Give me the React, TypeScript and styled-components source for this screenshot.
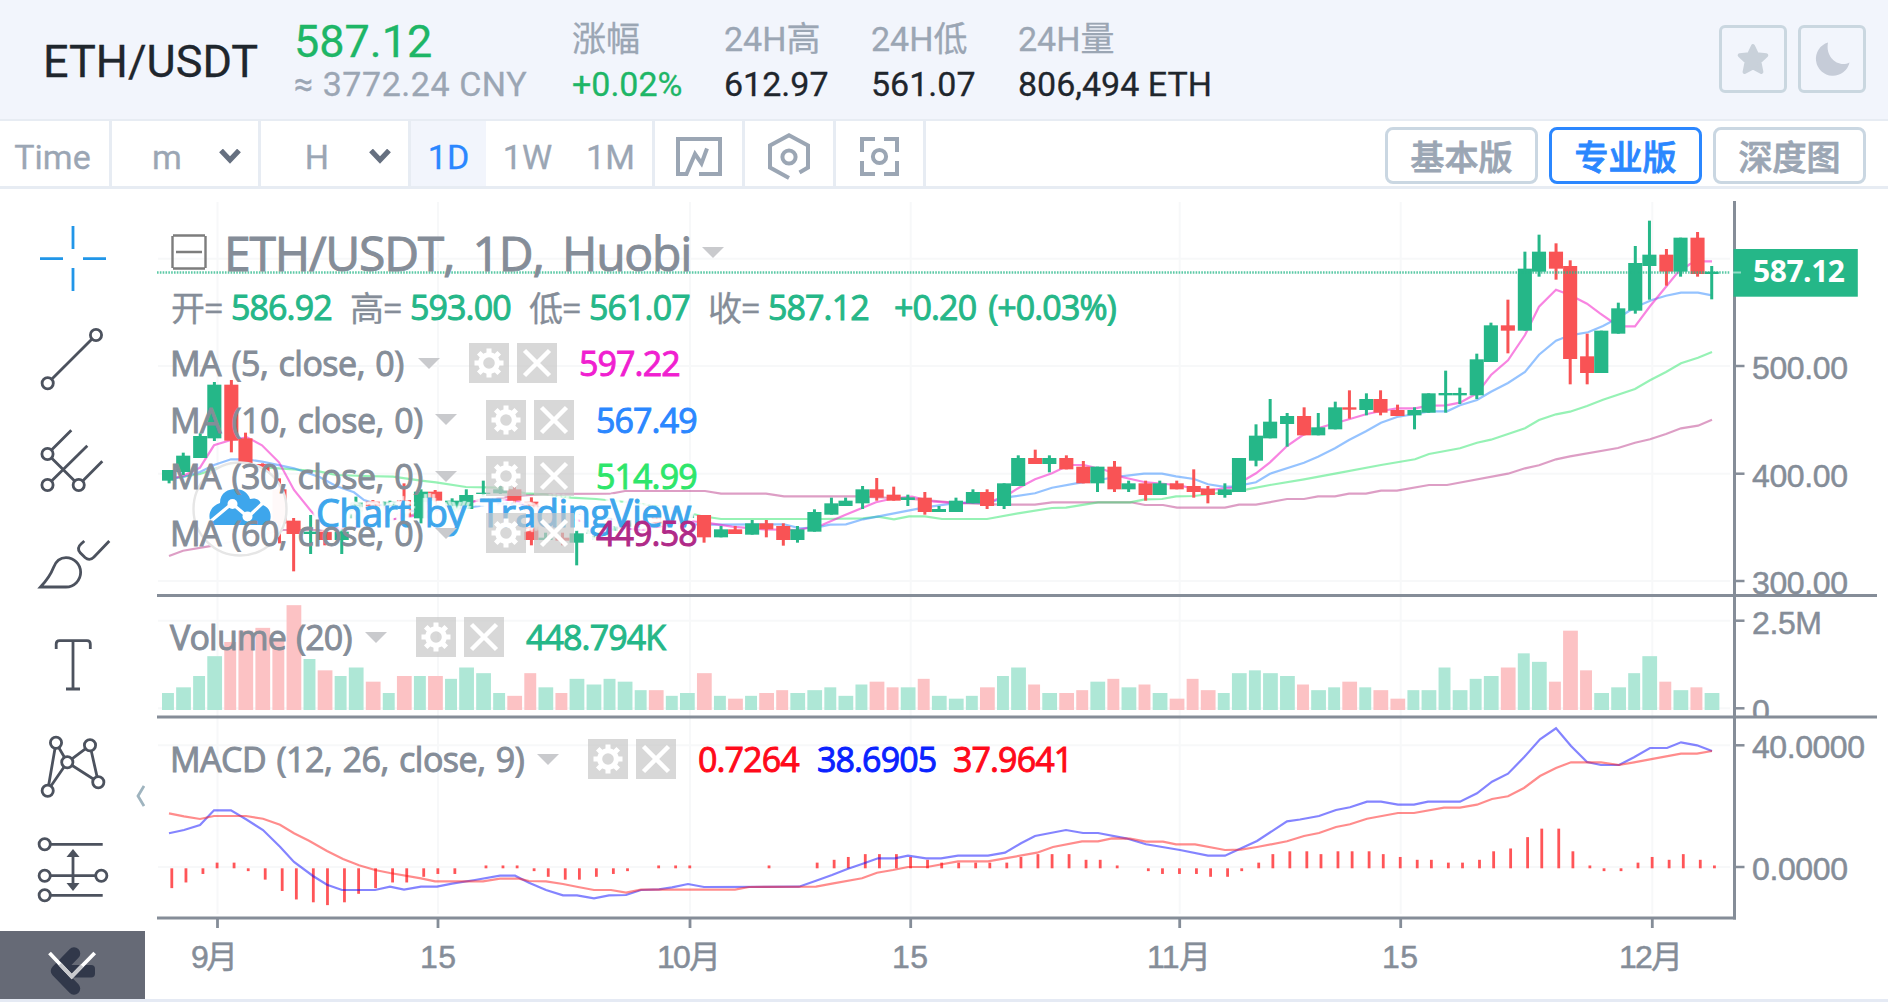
import React from "react";
import styled, { createGlobalStyle, css } from "styled-components";

const Color = {
  header: "#f2f5fc",
  line: "#e7ecf3",
  muted: "#9ba6b4",
  dark: "#1f262d",
  green: "#1eb667",
  blue: "#2b87ff",
  axis: "#858d98",
  up: "#25b788",
  down: "#f95355",
  tool: "#4c525e",
};

const GlobalStyle = createGlobalStyle`
  body {
    margin: 0;
    background: #fff;
    font-family: Roboto, "Noto Sans CJK SC", sans-serif;
  }
  * {
    box-sizing: border-box;
  }
`;

const flex = styled.div`
  display: flex;
  align-items: center;
`;

const Page = styled.div`
  display: flex;
  flex-direction: column;
  width: 1888px;
  height: 1002px;
  overflow: hidden;
  border-bottom: 3px solid #e5eaf4;
`;

/* header */
const Header = styled(flex)`
  flex: none;
  height: 121px;
  padding: 0 22px 0 43px;
  background: ${Color.header};
  border-bottom: 2px solid ${Color.line};
  -webkit-text-stroke: 0.3px currentColor;
`;
const Pair = styled.h1`
  margin: 0 38px 0 0;
  padding-top: 5px;
  width: 213px;
  font-size: 45px;
  font-weight: 400;
  line-height: 60px;
  white-space: nowrap;
  color: ${Color.dark};
`;
const Stat = styled.div<{ $w: number }>`
  display: flex;
  flex-direction: column;
  width: ${(p) => p.$w}px;
  padding-top: 5px;
  font-size: 34px;
  line-height: 45px;
  white-space: nowrap;
`;
const Price = styled.span`
  padding-top: 2px;
  margin-bottom: -2px;
  font-size: 45px;
  color: ${Color.green};
`;
const Muted = styled.span<{ $spacing?: number }>`
  letter-spacing: ${(p) => p.$spacing || 0}px;
  color: ${Color.muted};
`;
const Value = styled.span<{ $up?: boolean }>`
  color: ${(p) => (p.$up ? Color.green : Color.dark)};
`;
const HeaderButtons = styled(flex)`
  gap: 11px;
  margin-left: auto;
  padding-bottom: 1px;
`;
const SquareButton = styled.button`
  display: flex;
  align-items: center;
  justify-content: center;
  width: 68px;
  height: 68px;
  padding: 0;
  background: none;
  border: 3px solid #cad7e0;
  border-radius: 6px;
`;

/* toolbar */
const Toolbar = styled(flex)`
  flex: none;
  height: 68px;
  padding-right: 22px;
  border-bottom: 3px solid ${Color.line};
  font-size: 34px;
  color: ${Color.muted};
  -webkit-text-stroke: 0.3px currentColor;
`;
const Cell = styled(flex)<{ $w: number; $line?: boolean; $active?: boolean }>`
  justify-content: center;
  width: ${(p) => p.$w}px;
  height: 100%;
  padding-top: 6px;
  ${(p) =>
    p.$line &&
    css`
      border-right: 3px solid ${Color.line};
    `}
  ${(p) =>
    p.$active &&
    css`
      background: ${Color.header};
      color: ${Color.blue};
    `}
`;
const TimeCell = styled(Cell)`
  padding-right: 4px;
`;
const Dropdown = styled(Cell)`
  justify-content: flex-end;
  padding-right: 17px;
`;
const Unit = styled.span`
  width: 60px;
  margin-right: 22px;
  text-align: center;
`;
const Modes = styled(flex)`
  gap: 11px;
  margin-left: auto;
  padding-top: 4px;
`;
const Mode = styled.button<{ $active?: boolean }>`
  width: 153px;
  height: 57px;
  padding: 0;
  background: #fff;
  border: 3px solid ${(p) => (p.$active ? Color.blue : "#cad7e2")};
  border-radius: 8px;
  font: 500 34px "Noto Sans CJK SC", sans-serif;
  line-height: 51px;
  -webkit-text-stroke: 0.8px currentColor;
  color: ${(p) => (p.$active ? Color.blue : Color.muted)};
`;

/* body */
const Body = styled.div`
  display: grid;
  grid-template-columns: 145px 1fr;
  flex: 1;
  min-height: 0;
`;
const Sidebar = styled.div`
  position: relative;
  display: flex;
  flex-direction: column;
  padding-top: 18px;
`;
const Tool = styled.svg<{ $active?: boolean }>`
  width: 145px;
  height: 102px;
  flex: none;
  fill: none;
  stroke: ${(p) => (p.$active ? "#2196e8" : Color.tool)};
  stroke-width: 2.8px;
  circle {
    fill: #fff;
  }
`;
const Collapse = styled.svg`
  position: absolute;
  right: 0;
  top: 596px;
`;
const More = styled.div`
  margin-top: auto;
  height: 68px;
  background: #666a76;
`;

const ChartArea = styled.div`
  position: relative;
`;
const ChartSvg = styled.svg`
  display: block;
  width: 1743px;
  height: 810px;
`;
const AxisText = styled.text`
  font-family: "Liberation Sans", "Noto Sans CJK SC", sans-serif;
  font-size: 32px;
  fill: ${Color.axis};
  stroke: ${Color.axis};
  stroke-width: 0.5px;
`;
const Watermark = styled.span`
  position: absolute;
  left: 171px;
  top: 297px;
  font-family: "Open Sans", sans-serif;
  font-size: 38px;
  line-height: 52px;
  letter-spacing: -0.6px;
  word-spacing: 5px;
  white-space: nowrap;
  color: #3ea6ec;
  -webkit-text-stroke: 1px #3ea6ec;
  /* the white halo fades the candles behind the letters */
  text-shadow: ${[
    [5, 0], [-5, 0], [0, 5], [0, -5], [4, 4], [-4, 4], [4, -4], [-4, -4], [2, 0], [-2, 0],
  ]
    .map(([x, y]) => `${x}px ${y}px 1px rgba(255, 255, 255, 0.75)`)
    .join(", ")};
`;

/* legends lie over the panes */
const Legend = styled.div<{ $top: number }>`
  position: absolute;
  left: 26px;
  top: ${(p) => p.$top}px;
  font-family: "Open Sans", "Noto Sans CJK SC", sans-serif;
  font-size: 34px;
  white-space: nowrap;
  color: ${Color.axis};
  -webkit-text-stroke: 0.95px currentColor;
`;
const TitleRow = styled(flex)`
  height: 60px;
  font-size: 48px;
`;
const Title = styled.span`
  width: 478px;
  margin-left: 17px;
  letter-spacing: -1.2px;
  word-spacing: 7px;
`;
const OhlcRow = styled(flex)`
  height: 49px;
`;
const Ohlc = styled(flex)<{ $w: number }>`
  width: ${(p) => p.$w}px;
  letter-spacing: -0.9px;
`;
const OhlcLabel = styled.span`
  width: 60px;
  -webkit-text-stroke: 0.3px currentColor;
`;
const Up = styled.span`
  color: ${Color.up};
`;
const Change = styled(Up)`
  letter-spacing: -0.9px;
  word-spacing: 4px;
`;
const StudyRow = styled(flex)`
  height: 40px;
  margin-bottom: 16.7px;
`;
const StudyName = styled.span<{ $w: number; $spacing?: number }>`
  width: ${(p) => p.$w}px;
  margin-left: -1px;
  letter-spacing: ${(p) => p.$spacing ?? -0.5}px;
  word-spacing: 2px;
`;
const StudyButton = styled.span`
  display: flex;
  align-items: center;
  justify-content: center;
  width: 40px;
  height: 40px;
  margin-right: 8px;
  background: rgba(200, 200, 200, 0.7);
`;
const StudyValue = styled.span<{ $color: string; $w?: number }>`
  margin-left: 14px;
  width: ${(p) => (p.$w ? `${p.$w}px` : "auto")};
  letter-spacing: -0.9px;
  color: ${(p) => p.$color};
`;
const Caret = styled.svg`
  width: 22px;
  height: 11px;
  flex: none;
  fill: #c9cacd;
`;
const Gap = styled.span`
  width: 29px;
`;

const Chevron = () => (
  <svg width="22" height="15" viewBox="0 0 22 15">
    <path d="M2 1.5 L11 11 L20 1.5" fill="none" stroke="#667080" strokeWidth="5.2" />
  </svg>
);

const Down = () => (
  <Caret viewBox="0 0 22 11">
    <path d="M0 0 H22 L11 11 Z" />
  </Caret>
);

const Gear = () => (
  <svg width="30" height="30" viewBox="-15 -15 30 30" stroke="#fff" fill="none">
    <circle r="8.3" strokeWidth="5" />
    {[0, 45, 90, 135].map((a) => (
      <path key={a} d="M0 -14.5 V-9 M0 9 V14.5" strokeWidth="5" transform={`rotate(${a})`} />
    ))}
  </svg>
);

const Cross = () => (
  <svg width="30" height="30" viewBox="0 0 30 30">
    <path d="M2.5 2.5 L27.5 27.5 M27.5 2.5 L2.5 27.5" stroke="#fff" strokeWidth="4.5" />
  </svg>
);

// x of every bar lies on a 2.83px pixel grid
const STEP = 2.8305;
const slot = (k: number) => Math.floor(5.57 * k + 0.06);
const barX = (k: number) => 169 + STEP * slot(k);
const y3 = (v: number) => 190 + v / 3;

type Candle = [number, number, number, number, number];

// rising (1) or falling (0), high, body top, body bottom, low
const candles: Candle[] = [
  [1, 840, 840, 872, 880], [1, 788, 797, 846, 855], [1, 730, 738, 804, 804], [1, 576, 584, 745, 753],
  [0, 570, 584, 752, 787], [0, 728, 745, 822, 822], [0, 820, 822, 846, 850], [0, 865, 898, 1000, 1060],
  [0, 984, 992, 1032, 1144], [1, 975, 1025, 1032, 1092], [0, 1018, 1025, 1050, 1066], [1, 1018, 1025, 1050, 1092],
  [1, 920, 938, 985, 990], [0, 930, 935, 960, 960], [1, 932, 935, 960, 960], [0, 880, 930, 980, 980],
  [1, 898, 905, 985, 1000], [0, 900, 905, 932, 945], [1, 925, 932, 965, 965], [1, 898, 915, 957, 957],
  [1, 872, 908, 912, 920], [1, 888, 898, 910, 912], [0, 890, 898, 932, 940], [0, 922, 935, 1050, 1066],
  [1, 1028, 1043, 1050, 1060], [0, 1028, 1043, 1052, 1066], [1, 1022, 1030, 1058, 1126], [1, 1010, 1018, 1032, 1048],
  [1, 1000, 1008, 1022, 1022], [1, 985, 990, 1010, 1010], [1, 955, 960, 990, 990], [0, 958, 965, 1000, 1000],
  [1, 965, 972, 984, 984], [1, 965, 972, 984, 984], [0, 975, 975, 1042, 1058], [1, 1008, 1018, 1042, 1042],
  [0, 1008, 1018, 1032, 1032], [1, 990, 1000, 1034, 1034], [0, 990, 1000, 1018, 1042], [0, 1000, 1008, 1050, 1067],
  [1, 1008, 1018, 1050, 1058], [1, 958, 966, 1025, 1025], [1, 923, 940, 974, 974], [1, 923, 932, 948, 948],
  [1, 888, 898, 940, 957], [0, 864, 898, 923, 932], [0, 890, 914, 932, 932], [1, 914, 922, 930, 948],
  [0, 906, 923, 966, 974], [1, 948, 957, 966, 966], [1, 923, 932, 966, 966], [1, 898, 906, 940, 940],
  [0, 898, 906, 948, 957], [1, 880, 880, 948, 957], [1, 796, 804, 888, 888], [0, 779, 804, 822, 822],
  [1, 796, 804, 822, 847], [0, 796, 804, 838, 838], [0, 813, 830, 880, 880], [1, 830, 830, 880, 906],
  [0, 813, 830, 898, 906], [1, 872, 880, 898, 906], [0, 872, 880, 915, 932], [1, 872, 880, 915, 915],
  [0, 872, 880, 898, 898], [0, 838, 888, 906, 923], [0, 888, 896, 915, 940], [1, 880, 898, 915, 923],
  [1, 804, 804, 906, 906], [1, 703, 737, 812, 829], [1, 627, 695, 745, 745], [1, 669, 678, 702, 770],
  [0, 652, 678, 736, 736], [1, 669, 712, 736, 736], [1, 635, 652, 718, 718], [0, 601, 652, 659, 686],
  [1, 610, 627, 660, 676], [0, 601, 627, 668, 676], [0, 644, 660, 678, 678], [1, 652, 660, 676, 718],
  [1, 610, 610, 668, 668], [1, 542, 609, 616, 668], [1, 593, 609, 616, 642], [1, 491, 508, 616, 627],
  [1, 398, 406, 516, 516], [0, 329, 406, 422, 490], [1, 185, 236, 422, 422], [1, 134, 185, 245, 260],
  [0, 160, 185, 236, 269], [0, 211, 228, 507, 583], [0, 431, 499, 549, 583], [1, 422, 422, 549, 549],
  [1, 338, 355, 431, 431], [1, 168, 219, 362, 371], [1, 92, 194, 228, 329], [0, 177, 194, 245, 287],
  [1, 143, 143, 245, 260], [0, 126, 143, 252, 260], [1, 228, 245, 252, 328],
];

const volumes = [
  6, 8, 12, 19, 24, 28, 29, 25, 37, 18, 14, 12, 15, 10, 6, 12, 12, 12, 11, 15, 13, 6, 5, 13, 8, 6, 11, 9, 11, 10,
  7, 7, 5, 6, 13, 5, 4, 5, 6, 7, 6, 7, 8, 5, 9, 10, 8, 8, 11, 5, 4, 5, 8, 12, 15, 9, 6, 6, 7, 10,
  11, 8, 9, 6, 4, 11, 7, 6, 13, 14, 13, 12, 9, 7, 8, 10, 8, 7, 4, 7, 7, 15, 7, 11, 12, 15, 20, 17, 10, 28,
  14, 6, 8, 13, 19, 10, 7, 8, 6,
];

const histogram = [
  -7, -5, -2, 2, 2, -1, -4, -8, -11, -12, -13, -12, -9, -7, -5, -5, -3, -2, -2, 0, 1, 1, 1, -1, -3, -4, -4, -3, -2, -1,
  0, 1, 1, 1, 0, 0, 0, 0, 1, 0, 0, 2, 3, 4, 5, 5, 5, 4, 3, 2, 2, 2, 2, 2, 4, 5, 5, 5, 3, 3,
  1, 0, -1, -2, -2, -2, -3, -3, -1, 2, 5, 6, 6, 5, 6, 6, 6, 5, 4, 3, 3, 2, 2, 3, 6, 7, 11, 14, 14, 6,
  1, -1, -1, 2, 4, 3, 5, 3, 1,
];

const lines = [
  {
    color: "#b3277f",
    opacity: 0.45,
    points:
      "169,556 183,550.7 213,545.7 283,530 310,530 341,530 400,518 440,508 480,500 521,495.7 543,494 611,493.7 625,491 705,491 721,493.7 766,493.7 784,496.3 855,496.3 894,498 925,500 959,503 1001,504.7 1035,504.7 1052,502.3 1132,502.3 1145,505 1163,505 1177,507.7 1225,507.7 1239,504.7 1256,504.7 1287,499 1304,499 1318,496.3 1335,496.3 1349,493.7 1366,493.7 1381,490.7 1397,490.7 1429,485 1447,485 1508,473.7 1525,468.3 1539,465.3 1556,459.3 1570,456.3 1618,448 1635,442.7 1650,439.3 1666,434 1681,428.3 1698,425.7 1712,419.7",
  },
  {
    color: "#2ee66b",
    opacity: 0.5,
    points:
      "169,479 200,474 214,469 231,465 267,467.7 294,469.3 320,471.7 336,475 364,476 393,476.7 421,480.7 436,482.3 466,487 500,487.7 525,493.3 546,494.3 571,497.7 596,499 625,502 650,505 671,508 701,516 721,519 822,519 863,518.3 878,516.7 894,519.3 909,516.3 925,516.3 942,519 987,519 1018,513.3 1052,508 1066,507.7 1098,502.3 1130,502.3 1145,499.3 1162,499 1176,496.3 1194,496 1226,492 1247,489.3 1270,485 1304,479.3 1335,473.7 1381,465 1415,459.3 1429,454 1460,448.3 1477,442.7 1491,439.7 1525,428.3 1539,420 1556,414.3 1570,411.7 1587,406 1603,399.7 1635,389 1650,380.3 1666,372 1681,363.3 1698,357.7 1712,352",
  },
  {
    color: "#2b87ff",
    opacity: 0.5,
    points:
      "169,479 183,477 200,472 214,465 231,459.3 247,459.3 262,461.7 294,468.3 320,477.3 336,486 354,492.3 364,500 390,508 420,512 450,510 480,506 514,503 545,508 580,514 620,520 660,524 714,524.7 784,524.3 800,528.3 817,527.3 830,524.7 846,524.3 863,519.3 894,513.3 925,507.3 959,502.7 987,502.7 1012,496.7 1035,493.3 1052,487.7 1076,483.3 1098,480 1119,476.7 1144,473.7 1162,473.7 1176,476.3 1194,479 1208,484.3 1223,486.7 1234,486.7 1256,482.3 1270,473.7 1304,462.7 1318,456.7 1335,448.3 1349,440 1366,431.3 1381,422.7 1397,417 1415,414 1429,411.3 1447,411.3 1460,405.3 1477,400 1491,391.7 1508,383 1525,372 1539,354.7 1556,340.7 1570,335.3 1588,332.3 1603,326 1618,318 1635,307.3 1652,300 1666,295.7 1681,292.7 1698,292.7 1712,295.3",
  },
  {
    color: "#f21fc9",
    opacity: 0.55,
    points:
      "169,479 183,476 200,467.7 214,445.3 231,440 247,437.3 262,445.3 279,462.3 294,490 311,511 325,526 345,530 375,522 420,515 452,507 480,500 514,500 545,513 576,520 608,527 642,530 672,524 690,521 711,523.3 732,526.7 764,529.3 798,530 822,525 845,515 876,502.3 894,498.3 912,496.7 934,501.7 959,503.3 991,501.7 1011,492.7 1019,487.7 1035,479.3 1052,473.3 1069,465 1084,465 1105,470 1123,477.3 1144,482 1176,485 1194,488.3 1209,490 1232,487.7 1239,483.3 1256,473.3 1270,462.3 1287,446 1304,434.3 1318,428.3 1335,423.3 1349,419.3 1366,414.3 1381,411 1397,408.3 1415,408.3 1429,405.7 1446,405.3 1460,402.7 1477,393.3 1491,375 1508,360.3 1525,335 1539,306.7 1556,289.7 1570,295 1587,303.7 1600,313.3 1612,321.7 1623,326.3 1635,326.3 1650,306.3 1666,286.7 1677,273.3 1690,264 1700,261.3 1712,261.3",
  },
];

const macdLine =
  "169,833.3 184,830 200,825 214,810.3 231,810.3 246,819.3 263,830 280,846.7 294,862 313,876 327,884.7 342,890 375,890 390,886.7 404,889.7 421,886.7 437,886.7 452,883.7 475,880 500,875.7 515,875.7 529,882.7 546,890 563,895.3 577,895.3 594,898.3 609,895.3 626,895 641,890 659,889.3 672,887.3 688,884 704,887 799,886.7 816,880.7 832,875 848,868.7 862,864 878,858.3 895,858.3 908,855.7 926,858.3 941,858.3 958,855.7 988,855.7 1005,852.7 1021,843.3 1035,836 1066,830 1083,833 1098,833 1126,838.3 1146,844.3 1180,850 1208,855.7 1225,855.7 1239,849.3 1257,841 1287,821.3 1300,819.5 1319,816 1336,810 1350,807.3 1367,801.7 1381,801.7 1398,804.7 1414,804.7 1428,801.7 1460,801.7 1477,793.3 1492,781.7 1508,773.7 1524,757.3 1540,739.3 1556,728.3 1571,746 1587,762 1601,765 1619,765 1634,757.3 1650,748 1667,748 1681,742.3 1697,745.3 1712,751";
const signalLine =
  "169,813.3 184,816.3 200,819 214,816 246,816 263,818.7 280,824.7 294,833.3 309,840.7 327,851 343,859 359,865.3 375,870 390,873 421,878.3 435,881.3 483,881.3 500,878.7 519,878.7 529,881 546,881.3 563,884 578,887 594,890 611,890 626,892.7 641,889.7 735,889.7 749,887 816,886.7 832,883.7 862,878.3 877,872.7 893,870 908,867 927,867 958,861.3 988,861.3 1005,858.3 1037,852.7 1053,847 1082,841.3 1098,841.3 1112,838.3 1130,838.7 1146,841.7 1163,841.7 1176,844.3 1195,844.3 1225,850 1241,849.7 1257,847 1287,841.3 1304,836 1319,833 1336,827 1350,824.3 1367,818.7 1398,813 1414,813 1444,807.7 1460,807.7 1477,804.7 1492,799 1508,796.3 1524,788 1540,776 1556,768 1571,762.3 1601,762.3 1619,765 1634,762.3 1650,759.3 1681,753.7 1697,753.7 1712,751";

const months = [
  { x: 217.5, label: "9月", from: 191, w: 47 },
  { x: 438, label: "15", from: 420, w: 36 },
  { x: 690, label: "10月", from: 657, w: 64 },
  { x: 910.7, label: "15", from: 892, w: 36 },
  { x: 1179.7, label: "11月", from: 1147, w: 64 },
  { x: 1400.7, label: "15", from: 1382, w: 36 },
  { x: 1652.3, label: "12月", from: 1619, w: 64 },
];

const scale = [
  { y: 366, base: 379, label: "500.00", w: 96 },
  { y: 473.7, base: 486.5, label: "400.00", w: 96 },
  { y: 581, base: 593.5, label: "300.00", w: 96 },
  { y: 620.7, base: 633.5, label: "2.5M", w: 70 },
  { y: 708.3, base: 722, label: "0", w: 17 },
  { y: 745.3, base: 758, label: "40.0000", w: 113 },
  { y: 867, base: 879.5, label: "0.0000", w: 96 },
];

const Chart = () => (
  <ChartSvg viewBox="145 189 1743 810">
    <g stroke="#f7f8f9" strokeWidth="2">
      {months.map((m) => (
        <path key={m.x} d={`M${m.x} 202 V914`} />
      ))}
      {[258.7, ...scale.map((s) => s.y)].map((y) => (
        <path key={y} d={`M158 ${y} H1730`} />
      ))}
    </g>

    {volumes.map((v, k) => (
      <rect
        key={k}
        x={barX(k) - 7}
        y={710 - v * 2.833}
        width={STEP * (slot(k + 1) - slot(k) - 1) + 0.6}
        height={v * 2.833}
        fill={candles[k][0] ? "#aee7d6" : "#fcc2c4"}
      />
    ))}

    {lines.map((l) => (
      <polyline key={l.color} points={l.points} fill="none" stroke={l.color} strokeOpacity={l.opacity} strokeWidth="2.2" />
    ))}

    {candles.map(([up, high, top, bottom, low], k) => (
      <g key={k} fill={up ? Color.up : Color.down}>
        <rect x={barX(k) - 1.4} y={y3(high)} width="3" height={(low - high) / 3} />
        <rect x={barX(k) - 7} y={y3(top)} width="14.1" height={(bottom - top) / 3} />
      </g>
    ))}

    <path d="M157 272.5 H1730" stroke={Color.up} strokeOpacity="0.75" strokeWidth="2.4" strokeDasharray="1.6 1.23" />

    {histogram.map((h, k) => (
      <rect
        key={k}
        x={barX(k) + 1.4}
        y={h > 0 ? 868.3 - h * 2.833 : 868.3}
        width="2.8"
        height={Math.abs(h) * 2.833}
        fill="#ff5558"
      />
    ))}
    <polyline points={macdLine} fill="none" stroke="#0a0aff" strokeOpacity="0.5" strokeWidth="2.2" />
    <polyline points={signalLine} fill="none" stroke="#ff1a1a" strokeOpacity="0.5" strokeWidth="2.2" />

    {/* watermark badge */}
    <circle cx="240" cy="509" r="46.5" fill="#fff" fillOpacity="0.97" stroke="#e6e6e6" strokeWidth="2.4" />
    <path
      d="M213 525 C207 519 208 507 220 503 C220 492 229 489 235 489 C243 489 248 493 250 499 C257 497 261 501 261 505 C269 505 274 516 268 525 Z"
      fill="#3ea6ec"
    />
    <path d="M211 521 L232 503.5 L248 517 L266 500" fill="none" stroke="#fff" strokeWidth="3.2" />
    <circle cx="232.5" cy="504" r="5" fill="#fff" />
    <circle cx="247.5" cy="516.5" r="5" fill="#fff" />

    {scale.map((s) => (
      <AxisText key={s.label} x="1752" y={s.base} textLength={s.w}>
        {s.label}
      </AxisText>
    ))}
    <rect x="1740" y="716" width="140" height="10" fill="#fff" />
    {months.map((m) => (
      <AxisText key={m.x} x={m.from} y="967.5" textLength={m.w}>
        {m.label}
      </AxisText>
    ))}
    <g stroke={Color.axis} strokeWidth="3" fill="none">
      <path d="M1734.5 201 V919.5" />
      <path d="M157 595.5 H1877 M157 717 H1877 M157 918 H1736" />
      {scale.map((s) => (
        <path key={s.y} d={`M1734 ${s.y} H1744.5`} strokeWidth="2.5" />
      ))}
      {months.map((m) => (
        <path key={m.x} d={`M${m.x} 918 V928`} strokeWidth="2.8" />
      ))}
    </g>
    <rect x="1733.5" y="249" width="124.3" height="47.7" fill={Color.up} />
    <path d="M1733 272.5 H1741" stroke="#8fdcc4" strokeWidth="2" />
    <text
      x="1753"
      y="282"
      textLength="92"
      fontFamily='"Open Sans", sans-serif'
      fontWeight="700"
      fontSize="30"
      fill="#fff"
    >
      587.12
    </text>
  </ChartSvg>
);

const studies = [
  { name: "MA (5, close, 0)", w: 248, value: "597.22", color: "#f01fd0" },
  { name: "MA (10, close, 0)", w: 265, value: "567.49", color: "#2b87ff" },
  { name: "MA (30, close, 0)", w: 265, value: "514.99", color: "#2ee66b" },
  { name: "MA (60, close, 0)", w: 265, value: "449.58", color: "#b02a88" },
];

const Study = (props: { name: string; w: number; spacing?: number; children: React.ReactNode }) => (
  <StudyRow>
    <StudyName $w={props.w} $spacing={props.spacing}>
      {props.name}
    </StudyName>
    <Down />
    <Gap />
    <StudyButton>
      <Gear />
    </StudyButton>
    <StudyButton>
      <Cross />
    </StudyButton>
    {props.children}
  </StudyRow>
);

const SideTools = () => (
  <>
    <Tool $active viewBox="0 0 145 102">
      <path d="M73 19 V42 M73 61 V84 M40 51.7 H63 M83 51.7 H106" />
    </Tool>
    <Tool viewBox="0 0 145 102">
      <path d="M47.7 74.3 L96 26" />
      <circle cx="96" cy="26" r="5.6" />
      <circle cx="47.7" cy="74.3" r="5.6" />
    </Tool>
    <Tool viewBox="0 0 145 102">
      <path d="M47.5 43 L71.3 19.3 M47.5 74 L87.3 34.7 M78.7 74 L102.3 50.3 M47.5 43 L78.7 74" />
      <circle cx="47.5" cy="43" r="5.6" />
      <circle cx="47.5" cy="74" r="5.6" />
      <circle cx="78.7" cy="74" r="5.6" />
    </Tool>
    <Tool viewBox="0 0 145 102">
      <path d="M40.5 74 C48 66 51 61 53.5 54.5 C56 48 61 44.7 66 44.7 A14.6 14.6 0 0 1 66 74 Z" />
      <path d="M84.3 28 L81 31 Q76.5 35 80 39.5 L85 44.5 Q89.5 48.5 94 44 L109.3 28" />
    </Tool>
    <Tool viewBox="0 0 145 102">
      <path d="M56.2 34 V29 Q56.2 25.7 59.5 25.7 H87 Q90.3 25.7 90.3 29 V34 M73 25.7 V74 M66 74 H80" />
    </Tool>
    <Tool viewBox="0 0 145 102">
      <path d="M56 25.7 L47.7 73.7 L67.3 45.3 Z M67.3 45.3 L90 28.3 L98.3 65.3 Z" />
      <circle cx="56" cy="25.7" r="5.6" />
      <circle cx="90" cy="28.3" r="5.6" />
      <circle cx="67.3" cy="45.3" r="5.6" />
      <circle cx="47.7" cy="73.7" r="5.6" />
      <circle cx="98.3" cy="65.3" r="5.6" />
    </Tool>
    <Tool viewBox="0 0 145 102">
      <path d="M44.7 25.3 H102.7 M44.7 56.7 H101.3 M44.7 76.3 H102.7 M73 36 V66" />
      <path d="M73 30 L79.5 38 H66.5 Z M73 72 L79.5 64 H66.5 Z" fill={Color.tool} stroke="none" />
      <circle cx="44.7" cy="25.3" r="5.6" />
      <circle cx="44.7" cy="56.7" r="5.6" />
      <circle cx="101.3" cy="56.7" r="5.6" />
      <circle cx="44.7" cy="76.3" r="5.6" />
    </Tool>
  </>
);

const App = () => {
  return (
    <Page>
      <GlobalStyle />
      <Header>
        <Pair>ETH/USDT</Pair>
        <Stat $w={278}>
          <Price>587.12</Price>
          <Muted $spacing={0.55}>≈ 3772.24 CNY</Muted>
        </Stat>
        <Stat $w={152}>
          <Muted>涨幅</Muted>
          <Value $up>+0.02%</Value>
        </Stat>
        <Stat $w={147}>
          <Muted>24H高</Muted>
          <Value>612.97</Value>
        </Stat>
        <Stat $w={147}>
          <Muted>24H低</Muted>
          <Value>561.07</Value>
        </Stat>
        <Stat $w={220}>
          <Muted>24H量</Muted>
          <Value>806,494 ETH</Value>
        </Stat>
        <HeaderButtons>
          <SquareButton>
            <svg width="34" height="34" viewBox="0 0 34 34">
              <path
                d="M17 4 L20.8 12.2 L30.3 13.2 L23.4 19.8 L25.4 30 L17 25.4 L8.6 30 L10.6 19.8 L3.7 13.2 L13.2 12.2 Z"
                fill="#c9d1da"
                stroke="#c9d1da"
                strokeWidth="4"
                strokeLinejoin="round"
              />
            </svg>
          </SquareButton>
          <SquareButton>
            <svg width="36" height="36" viewBox="0 0 36 36">
              <path d="M14 1.5 A17 17 0 1 0 35.5 21.5 C25 27 11 17 14 1.5 Z" fill="#c6ccd8" />
            </svg>
          </SquareButton>
        </HeaderButtons>
      </Header>

      <Toolbar>
        <TimeCell $w={112} $line>
          Time
        </TimeCell>
        <Dropdown $w={149} $line>
          <Unit>m</Unit>
          <Chevron />
        </Dropdown>
        <Dropdown $w={150} $line>
          <Unit>H</Unit>
          <Chevron />
        </Dropdown>
        <Cell $w={75} $active>
          1D
        </Cell>
        <Cell $w={83}>1W</Cell>
        <Cell $w={86} $line>
          1M
        </Cell>
        <Cell $w={90} $line>
          <svg width="46" height="40" viewBox="0 0 46 40" fill="none" stroke={Color.muted} strokeWidth="4">
            <path d="M23 37 H44 V2 H2 V37 H10.5 L19 17 L25.5 26.5 L31 11.5" />
          </svg>
        </Cell>
        <Cell $w={91} $line>
          <svg width="42" height="50" viewBox="0 0 42 50" fill="none" stroke={Color.muted} strokeWidth="4">
            <path d="M21 46 L2 35.5 V13.5 L21 3.3 L40 13.5 V35.5 L31.5 40.5" />
            <circle cx="21" cy="25" r="6.6" />
          </svg>
        </Cell>
        <Cell $w={90} $line>
          <svg width="40" height="40" viewBox="2 0 40 40" fill="none" stroke={Color.muted} strokeWidth="4">
            <path d="M17 2 H4 V15 M26 2 H39 V15 M4 24 V37 H17 M39 24 V37 H26" />
            <circle cx="21.5" cy="19.5" r="6.6" />
          </svg>
        </Cell>
        <Modes>
          <Mode>基本版</Mode>
          <Mode $active>专业版</Mode>
          <Mode>深度图</Mode>
        </Modes>
      </Toolbar>

      <Body>
        <Sidebar>
          <SideTools />
          <Collapse width="9" height="22" viewBox="0 0 9 22">
            <path d="M8 1 L2 11 L8 21" fill="none" stroke="#9fb4bf" strokeWidth="2.8" />
          </Collapse>
          <More>
            <svg width="145" height="68" viewBox="0 0 145 68" fill="none">
              <path d="M74 22.5 L57 40 L74 57.5" stroke="#31384a" strokeWidth="12.5" strokeLinecap="round" strokeLinejoin="round" />
              <rect x="60" y="34" width="35" height="12.5" rx="4" fill="#31384a" />
              <path d="M49.5 22 L71.7 45.5 L94.7 22" stroke="#fff" strokeWidth="3.8" />
              <path d="M60 33.1 L71.7 45.5 L82 34.8" stroke="#c8c9cd" strokeWidth="3.8" />
            </svg>
          </More>
        </Sidebar>
        <ChartArea>
          <Chart />
          <Watermark>Chart by TradingView</Watermark>
          <Legend $top={33}>
            <TitleRow>
              <svg width="36" height="36" viewBox="0 0 36 36" fill="none" stroke="#7d7d7d" strokeWidth="2.4">
                <path d="M2 1.5 H34 M2 34.5 H34 M1.5 2 V34 M34.5 2 V34 M5 18 H31" />
              </svg>
              <Title>ETH/USDT, 1D, Huobi</Title>
              <Down />
            </TitleRow>
            <OhlcRow>
              <Ohlc $w={179}>
                <OhlcLabel>开=</OhlcLabel>
                <Up>586.92</Up>
              </Ohlc>
              <Ohlc $w={179}>
                <OhlcLabel>高=</OhlcLabel>
                <Up>593.00</Up>
              </Ohlc>
              <Ohlc $w={179}>
                <OhlcLabel>低=</OhlcLabel>
                <Up>561.07</Up>
              </Ohlc>
              <Ohlc $w={186}>
                <OhlcLabel>收=</OhlcLabel>
                <Up>587.12</Up>
              </Ohlc>
              <Change>+0.20 (+0.03%)</Change>
            </OhlcRow>
          </Legend>
          <Legend $top={154}>
            {studies.map((s) => (
              <Study key={s.name} name={s.name} w={s.w}>
                <StudyValue $color={s.color}>{s.value}</StudyValue>
              </Study>
            ))}
          </Legend>
          <Legend $top={428}>
            <Study name="Volume (20)" w={195} spacing={-0.8}>
              <StudyValue $color={Color.up}>448.794K</StudyValue>
            </Study>
          </Legend>
          <Legend $top={550}>
            <Study name="MACD (12, 26, close, 9)" w={367}>
              <StudyValue $color="#ff0a1a" $w={105}>
                0.7264
              </StudyValue>
              <StudyValue $color="#0a22ff" $w={122}>
                38.6905
              </StudyValue>
              <StudyValue $color="#ff0a1a">37.9641</StudyValue>
            </Study>
          </Legend>
        </ChartArea>
      </Body>
    </Page>
  );
};

export default App;
